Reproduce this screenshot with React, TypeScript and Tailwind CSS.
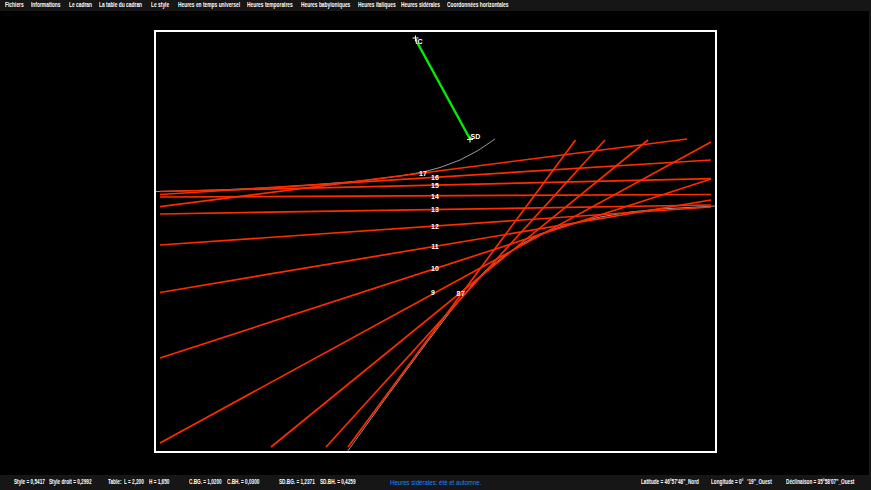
const menu: [string, number][] = [
  ["Fichiers", 26],
  ["Informations", 38],
  ["Le cadran", 30],
  ["La table du cadran", 52],
  ["Le style", 27],
  ["Heures en temps universel", 69],
  ["Heures temporaires", 54],
  ["Heures babyloniques", 57],
  ["Heures italiques", 43],
  ["Heures sidérales", 46],
  ["Coordonnées horizontales", 70],
];

const status: [string, number][] = [
  ["Style = 0,5417", 35],
  ["Style droit = 0,2992", 59],
  ["Table:", 16],
  ["L = 2,200", 25],
  ["H = 1,650", 40],
  ["C.BG. = 1,0200", 38],
  ["C.BH. = 0,0300", 52],
  ["SD.BG. = 1,2371", 41],
  ["SD.BH. = 0,4259", 70],
];

const statusRight: [string, number][] = [
  ["Latitude = 46°57'46\"_Nord", 70],
  ["Longitude = 0°   '19\"_Ouest", 75],
  ["Déclinaison = 35°58'07\"_Ouest", 68],
];

// Hour lines, in page coordinates
const lines: [number, number, number, number][] = [
  [160, 206.7, 687, 139],
  [160, 194.5, 711, 160],
  [160, 191.5, 711, 178.7],
  [160, 197, 711, 194.5],
  [160, 214, 711, 205],
  [160, 245, 711, 207],
  [160, 292.5, 711, 200],
  [160, 358, 711, 179],
  [160, 443, 711, 142],
  [271, 447, 648, 140],
  [326, 447, 605, 140],
  [348, 447, 575.5, 140],
];

const labels: [string, number, number][] = [
  ["17", 423, 176],
  ["16", 435, 179.5],
  ["15", 435, 187.5],
  ["14", 435, 198.5],
  ["13", 435, 212],
  ["12", 435, 228.5],
  ["11", 435, 248.5],
  ["10", 435, 271],
  ["9", 433, 295],
  ["8", 458.5, 295.5],
  ["7", 463, 295.5],
];

const curveTop =
  "156,191.5 217,190 273,187.5 310,185 360,181 400,176 423,172 440,167.5 460,160 478,150.5 495,139";
const curveBottom =
  "347,452 383,402 425,345 450,312 472,285 485,271 503,257 520,245 540,234 560,227 600,217 630,212 660,209 716,206";

export default function App() {
  return (
    <div
      className="flex h-[490px] w-[871px] flex-col overflow-hidden bg-[#161616] text-[6.5px] font-bold leading-none text-white"
      style={{ fontFamily: '"Liberation Sans", Arial, sans-serif' }}
    >
      <div className="flex h-[11px] shrink-0 items-center pl-[5px]">
        {menu.map(([t, w]) => (
          <div key={t} style={{ width: w }}>
            <span className="block origin-left scale-x-[0.75] whitespace-nowrap">{t}</span>
          </div>
        ))}
      </div>
      <div className="mr-[2px] flex flex-1 items-start bg-black pl-[154px] pt-[19px]">
        <div className="h-[423px] w-[563px] border-2 border-white">
          <svg width="559" height="419" viewBox="156 32 559 419" className="block">
            <polyline points={curveTop} fill="none" stroke="#9a9a9a" strokeWidth="1" />
            <polyline points={curveBottom} fill="none" stroke="#9a9a9a" strokeWidth="1" />
            {lines.map(([a, b, c, d], i) => (
              <line key={i} x1={a} y1={b} x2={c} y2={d} stroke="#ff2c00" strokeWidth="1.7" />
            ))}
            <line x1="417.5" y1="43" x2="470" y2="139" stroke="#00f000" strokeWidth="2.4" />
            <path d="M412.5 38h6M415.5 35.5v6M467 139.5h6M470 136.5v6" stroke="#fff" strokeWidth="1" fill="none" />
            <g fill="#fff" fontSize="7" fontWeight="700" fontFamily='"Liberation Sans", Arial, sans-serif'>
              <text x="415.5" y="43.5">IC</text>
              <text x="470.5" y="138.5">SD</text>
              {labels.map(([t, x, y]) => (
                <text key={t} x={x} y={y} textAnchor="middle">
                  {t}
                </text>
              ))}
            </g>
          </svg>
        </div>
      </div>
      <div className="flex h-[15px] shrink-0 items-center pl-[14px]">
        {status.map(([t, w]) => (
          <div key={t} style={{ width: w }}>
            <span className="block origin-left scale-x-[0.72] whitespace-nowrap">{t}</span>
          </div>
        ))}
        <div className="w-[251px]">
          <span className="block origin-left scale-x-[0.87] whitespace-nowrap text-[7px] font-normal text-[#1a86ff]">
            Heures sidérales: été et automne.
          </span>
        </div>
        {statusRight.map(([t, w]) => (
          <div key={t} style={{ width: w }}>
            <span className="block origin-left scale-x-[0.72] whitespace-pre">{t}</span>
          </div>
        ))}
      </div>
    </div>
  );
}
